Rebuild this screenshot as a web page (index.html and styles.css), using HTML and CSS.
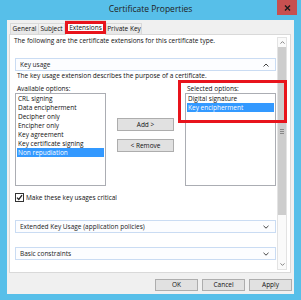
FILE: index.html
```html
<!DOCTYPE html>
<html>
<head>
<meta charset="utf-8">
<link rel="stylesheet" href="styles.css">
</head>
<body>
<div class="window">
  <div class="titlebar">
    <span></span>
    <span class="title">Certificate Properties</span>
    <div class="close"><svg width="7" height="6" viewBox="0 0 7 6"><path d="M1 0.5 L6 5.5 M6 0.5 L1 5.5" stroke="#1a1a1a" stroke-width="1.4"/></svg></div>
  </div>
  <div class="client">
    <div class="tabs">
      <div class="tab t-general">General</div>
      <div class="tab t-subject">Subject</div>
      <div class="tab selected t-ext">Extensions</div>
      <div class="tab t-pk">Private Key</div>
    </div>
    <div class="panel">
      <div class="content">
        <div class="intro">The following are the certificate extensions for this certificate type.</div>
        <div class="section-head"><span>Key usage</span><svg class="chev" width="6" height="4" viewBox="0 0 6 4"><path d="M0.5 3.5 L3 1 L5.5 3.5" fill="none" stroke="#444" stroke-width="1"/></svg></div>
        <div class="desc">The key usage extension describes the purpose of a certificate.</div>
        <div class="options">
          <div class="label">Available options:</div>
          <div></div>
          <div class="label">Selected options:</div>
          <div class="list">
            <div class="item">CRL signing</div>
            <div class="item">Data encipherment</div>
            <div class="item">Decipher only</div>
            <div class="item">Encipher only</div>
            <div class="item">Key agreement</div>
            <div class="item">Key certificate signing</div>
            <div class="item sel">Non repudiation</div>
          </div>
          <div class="mid">
            <div class="btn add">Add &gt;</div>
            <div class="btn remove">&lt; Remove</div>
          </div>
          <div class="list">
            <div class="item">Digital signature</div>
            <div class="item sel">Key encipherment</div>
          </div>
        </div>
        <div class="check-row">
          <span class="checkbox"><svg width="7" height="7" viewBox="0 0 7 7"><path d="M1 3.6 L2.8 5.5 L6 1.2" fill="none" stroke="#222" stroke-width="1.3"/></svg></span>
          <span>Make these key usages critical</span>
        </div>
        <div class="section-head sh2"><span>Extended Key Usage (application policies)</span><svg class="chev" width="6" height="4" viewBox="0 0 6 4"><path d="M0.5 0.8 L3 3.2 L5.5 0.8" fill="none" stroke="#444" stroke-width="1"/></svg></div>
        <div class="section-head sh3"><span>Basic constraints</span><svg class="chev" width="6" height="4" viewBox="0 0 6 4"><path d="M0.5 0.8 L3 3.2 L5.5 0.8" fill="none" stroke="#444" stroke-width="1"/></svg></div>
      </div>
      <div class="scrollbar">
        <div class="arrow"><svg width="5" height="3" viewBox="0 0 5 3"><path d="M0.5 2.6 L2.5 0.6 L4.5 2.6" fill="none" stroke="#777" stroke-width="0.9"/></svg></div>
        <div class="thumb"><span class="grip"></span></div>
        <div class="track"></div>
        <div class="arrow"><svg width="5" height="3" viewBox="0 0 5 3"><path d="M0.5 0.4 L2.5 2.4 L4.5 0.4" fill="none" stroke="#777" stroke-width="0.9"/></svg></div>
      </div>
    </div>
    <div class="buttons">
      <div class="btn dlg">OK</div>
      <div class="btn dlg">Cancel</div>
      <div class="btn dlg">Apply</div>
    </div>
  </div>
  <div class="redbox"></div>
</div>
</body>
</html>
```
FILE: styles.css
```css
* { box-sizing: border-box; margin: 0; padding: 0; }
html, body { margin: 0; width: 301px; height: 300px; overflow: hidden; }
body {
  background: #57bfe9;
  font-family: "Open Sans", "Noto Sans", sans-serif;
  font-size: 6.5px;
  color: #111;
}
.window {
  position: relative;
  width: 301px;
  height: 300px;
  background: #57bfe9;
  display: flex;
  flex-direction: column;
}
.titlebar {
  height: 20px;
  display: grid;
  grid-template-columns: 1fr auto 1fr;
  align-items: start;
}
.title {
  font-size: 8.5px;
  color: #222;
  line-height: 18px;
}
.close {
  justify-self: end;
  margin-right: 4px;
  width: 20px;
  height: 15px;
  background: #c75050;
  display: flex;
  align-items: center;
  justify-content: center;
}
.client {
  flex: 1;
  margin: 0 7px 6px 7px;
  background: #f0f0f0;
  display: flex;
  flex-direction: column;
}
.tabs {
  height: 14px;
  display: flex;
  align-items: flex-end;
  padding-left: 3px;
  position: relative;
  z-index: 2;
}
.tab {
  height: 11px;
  border: 1px solid #d9d9d9;
  border-bottom: none;
  background: linear-gradient(#f2f2f2, #e6e6e6);
  line-height: 10px;
  text-align: center;
  color: #111;
}
.t-general { width: 29px; }
.t-subject { width: 27px; margin-left: -1px; }
.tab.selected {
  position: relative;
  width: 41px;
  height: 15px;
  margin-bottom: -1px;
  background: #fff;
  line-height: 13px;
  margin-left: 0;
}
.tab.selected::after {
  content: "";
  position: absolute;
  left: -1px; top: 0; right: -1px; bottom: 1px;
  border: 3px solid #e8141c;
}
.t-pk { width: 36px; }
.panel {
  margin-left: 2px;
  width: 282px;
  height: 239px;
  background: #fff;
  border: 1px solid #d9d9d9;
  display: flex;
  padding: 1px 3px 2px 0;
}
.content {
  flex: 1;
  display: flex;
  flex-direction: column;
  padding: 0 1px 0 5px;
}
.intro {
  line-height: 10px;
  margin-left: -1px;
}
.section-head {
  height: 13px;
  border: 1px solid #cadcf3;
  background: #fcfdff;
  display: flex;
  align-items: center;
  justify-content: space-between;
  padding: 0 6px 0 4px;
  color: #222;
  margin-top: 12px;
}
.chev { display: block; }
.desc {
  line-height: 9px;
  padding-left: 2px;
}
.options {
  margin-top: 4px;
  display: grid;
  grid-template-columns: 91px 1fr 91px;
  grid-template-rows: 9px 93px;
}
.label {
  line-height: 9px;
  padding-left: 2px;
}
.list {
  border: 1px solid #abadb3;
  background: #fff;
  padding: 0 1px;
}
.item {
  line-height: 9px;
  height: 9px;
  padding-left: 1px;
  white-space: nowrap;
}
.item.sel {
  background: #3399ff;
  color: #fff;
}
.mid {
  display: flex;
  flex-direction: column;
  align-items: center;
  padding-top: 25px;
  gap: 8px;
}
.btn {
  background: #e1e1e1;
  border: 1px solid #adadad;
  text-align: center;
  color: #111;
}
.mid .btn {
  width: 57px;
  height: 13px;
  line-height: 11px;
}
.check-row {
  margin-top: 6px;
  height: 10px;
  display: flex;
  align-items: center;
  gap: 2px;
}
.checkbox {
  width: 9px;
  height: 9px;
  border: 1px solid #333;
  background: #fff;
  display: flex;
  align-items: center;
  justify-content: center;
}
.sh2 { margin-top: 18px; }
.sh3 { margin-top: 14px; }
.scrollbar {
  width: 10px;
  margin-top: 1px;
  display: flex;
  flex-direction: column;
  background: #fafafa;
  border: 1px solid #e3e3e3;
}
.arrow {
  height: 9px;
  display: flex;
  align-items: center;
  justify-content: center;
  flex-shrink: 0;
}
.thumb {
  height: 168px;
  background: #cdcdcd;
  display: flex;
  align-items: center;
  justify-content: center;
}
.grip {
  width: 4px;
  height: 5px;
  border-top: 1px solid #888;
  border-bottom: 1px solid #888;
  position: relative;
}
.grip::after {
  content: "";
  position: absolute;
  left: 0; right: 0; top: 1px;
  border-top: 1px solid #888;
}
.track { flex: 1; }
.buttons {
  margin-top: 6px;
  display: flex;
  justify-content: flex-end;
  gap: 4px;
  padding-right: 2px;
}
.btn.dlg {
  width: 43px;
  height: 12px;
  line-height: 10px;
}
.redbox {
  position: absolute;
  left: 178px;
  top: 80px;
  width: 109px;
  height: 43px;
  border: 3px solid #e8141c;
}
```
